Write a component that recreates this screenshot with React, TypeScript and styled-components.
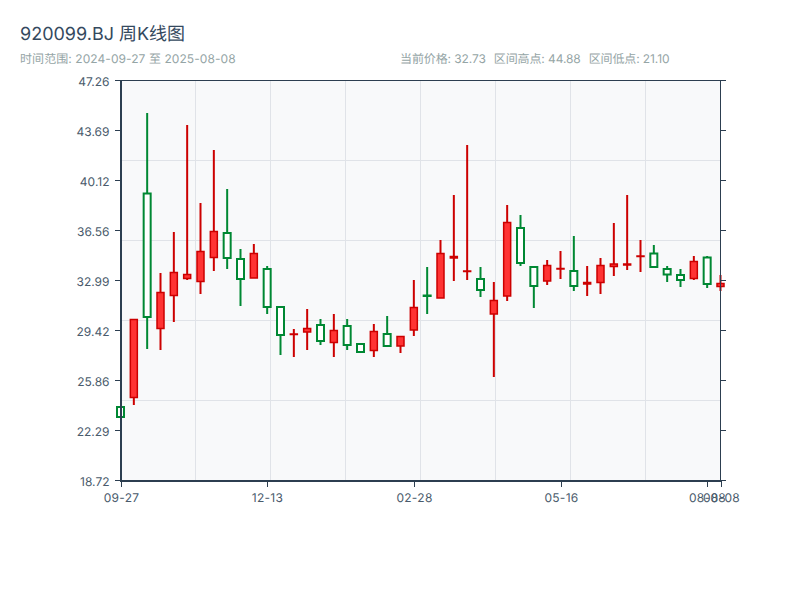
import React from 'react';
import styled, { createGlobalStyle } from 'styled-components';

const GlobalStyle = createGlobalStyle`
    html, body {
        margin: 0;
        padding: 0;
        background: #ffffff;
    }
    body {
        font-family: Inter, "Noto Sans CJK SC", sans-serif;
        text-rendering: geometricPrecision;
    }
`;

const Page = styled.div`
    width: 800px;
    height: 600px;
    overflow: hidden;
    background: #ffffff;
`;

const Header = styled.header`
    height: 68px;
    padding: 20px 20px 0;
    box-sizing: border-box;
`;

const Title = styled.h1`
    margin: 0;
    font-size: 18px;
    line-height: 30px;
    font-weight: 400;
    color: #34495e;
`;

const InfoRow = styled.div`
    display: grid;
    grid-template-columns: 1fr 1fr;
    font-size: 12px;
    line-height: 18px;
    color: #95a5a6;
`;

const TimeRange = styled.span`
    letter-spacing: 0.07px;
`;

const Stats = styled.div`
    display: flex;
    gap: 8px;
    letter-spacing: -0.1px;
`;

const Chart = styled.svg`
    display: block;
`;

const TickLabel = styled.text`
    font-size: 12px;
    fill: #4a5b6c;
`;

const DateLabel = styled(TickLabel)`
    letter-spacing: 0.3px;
`;

const PLOT_LEFT = 120.5;
const PLOT_TOP = 80;
const PLOT_W = 600;
const PLOT_H = 400;
const STEP = 600 / 45;
const AXIS = '#2c3e50';
const GRID = '#e0e3e8';

// 页面坐标下的像素值: [wickTop, wickBottom, bodyTop, bodyBottom, 'r' | 'g']
type Candle = [number, number, number, number, 'r' | 'g'];

const candles: Candle[] = [
    [407, 417, 407, 417, 'g'],
    [319, 405, 319.5, 397.5, 'r'],
    [113, 349, 193.5, 317, 'g'],
    [273, 350, 292.5, 328.5, 'r'],
    [232, 322, 272.5, 295.5, 'r'],
    [125, 280, 274.5, 278.5, 'r'],
    [203, 294, 251.5, 281.5, 'r'],
    [150, 271, 231.5, 257.5, 'r'],
    [189, 269, 233, 258, 'g'],
    [249, 306, 259, 279, 'g'],
    [244, 278, 253.5, 278, 'r'],
    [266, 314, 269, 307, 'g'],
    [307, 355, 307, 335, 'g'],
    [329, 357, 334, 334, 'r'],
    [309, 350, 328.5, 332, 'r'],
    [319, 345, 325, 341, 'g'],
    [314, 357, 330.5, 342.5, 'r'],
    [319, 350, 326, 345, 'g'],
    [344, 352, 344, 352, 'g'],
    [324, 357, 331.5, 350.5, 'r'],
    [316, 347, 334, 346, 'g'],
    [336, 353, 336.5, 346, 'r'],
    [280, 336, 307.5, 330, 'r'],
    [267, 314, 295.5, 295.5, 'g'],
    [240, 298, 253.5, 298, 'r'],
    [195, 281, 256.5, 258, 'r'],
    [145, 280, 271, 271, 'r'],
    [267, 297, 279, 290, 'g'],
    [282, 377, 300.5, 314, 'r'],
    [205, 301, 222.5, 296, 'r'],
    [215, 266, 228, 263, 'g'],
    [267, 308, 267, 286, 'g'],
    [260, 285, 265.5, 281, 'r'],
    [251, 279, 268.5, 268.5, 'r'],
    [236, 291, 271, 286, 'g'],
    [266, 296, 282.5, 284, 'r'],
    [258, 294, 265.5, 282.5, 'r'],
    [223, 276, 264, 266.5, 'r'],
    [195, 270, 264, 265, 'r'],
    [240, 272, 256, 256, 'r'],
    [245, 267, 253.5, 267, 'g'],
    [266, 282, 269, 274.5, 'g'],
    [269, 287, 275, 280, 'g'],
    [256, 280, 261.5, 278.5, 'r'],
    [256, 288, 257.5, 284, 'g'],
    [275, 291, 283.5, 286.5, 'r'],
];

const yLabels = ['47.26', '43.69', '40.12', '36.56', '32.99', '29.42', '25.86', '22.29', '18.72'];

const xLabels: [number, string][] = [
    [0, '09-27'],
    [11, '12-13'],
    [22, '02-28'],
    [33, '05-16'],
    [44, '08-08'],
    [45, '08-08'],
];

const CandleMark: React.FC<{ index: number; candle: Candle }> = ({ index, candle }) => {
    const [wickTop, wickBottom, bodyTop, bodyBottom, kind] = candle;
    const x = PLOT_LEFT + index * STEP;
    const stroke = kind === 'r' ? '#cc0000' : '#008833';
    const fill = kind === 'r' ? '#ff3333' : '#ffffff';
    return (
        <g>
            <line x1={x} x2={x} y1={wickTop} y2={wickBottom} stroke={stroke} strokeWidth={2} />
            <rect
                x={x - 3.5}
                y={bodyTop}
                width={7}
                height={Math.max(bodyBottom - bodyTop, 0.5)}
                fill={fill}
                stroke={stroke}
                strokeWidth={kind === 'g' ? 2 : 1.5}
            />
        </g>
    );
};

const CandleChart: React.FC = () => {
    const plotRight = PLOT_LEFT + PLOT_W;

    return (
        <Chart width={800} height={532} viewBox="0 68 800 532">
            <rect x={120} y={PLOT_TOP} width={PLOT_W} height={PLOT_H} fill="#f8f9fa" />

            {[1, 2, 3, 4, 5, 6, 7].map((i) => (
                <line key={i} x1={PLOT_LEFT + i * 75} x2={PLOT_LEFT + i * 75} y1={80} y2={480} stroke={GRID} strokeWidth={1} />
            ))}
            {[1, 2, 3, 4].map((i) => (
                <line key={i} x1={120} x2={720} y1={80.5 + i * 80} y2={80.5 + i * 80} stroke={GRID} strokeWidth={1} />
            ))}

            {candles.map((c, i) => (
                <CandleMark key={i} index={i} candle={c} />
            ))}

            {/* axes */}
            <line x1={115} x2={plotRight} y1={80.5} y2={80.5} stroke={AXIS} />
            <line x1={plotRight} x2={plotRight} y1={80} y2={481} stroke={AXIS} />
            <line x1={121} x2={121} y1={80} y2={481} stroke={AXIS} strokeWidth={2} />
            <line x1={120} x2={721} y1={481} y2={481} stroke={AXIS} strokeWidth={2} />

            {yLabels.map((label, i) => {
                const y = 80.5 + i * 50;
                return (
                    <g key={label}>
                        <line x1={115} x2={121} y1={y} y2={y} stroke={AXIS} />
                        <line x1={720} x2={726} y1={y} y2={y} stroke={AXIS} />
                        <TickLabel x={109.5} y={y + 5.5} textAnchor="end">
                            {label}
                        </TickLabel>
                    </g>
                );
            })}

            {xLabels.map(([index, label], i) => {
                const x = Math.round(PLOT_LEFT + index * STEP) + 0.5;
                return (
                    <g key={i}>
                        <line x1={x} x2={x} y1={481} y2={487} stroke={AXIS} />
                        <DateLabel x={x} y={502} textAnchor="middle">
                            {label}
                        </DateLabel>
                    </g>
                );
            })}
        </Chart>
    );
};

export default function App() {
    return (
        <Page>
            <GlobalStyle />
            <Header>
                <Title>920099.BJ 周K线图</Title>
                <InfoRow>
                    <TimeRange>时间范围: 2024-09-27 至 2025-08-08</TimeRange>
                    <Stats>
                        <span>当前价格: 32.73</span>
                        <span>区间高点: 44.88</span>
                        <span>区间低点: 21.10</span>
                    </Stats>
                </InfoRow>
            </Header>
            <CandleChart />
        </Page>
    );
}
